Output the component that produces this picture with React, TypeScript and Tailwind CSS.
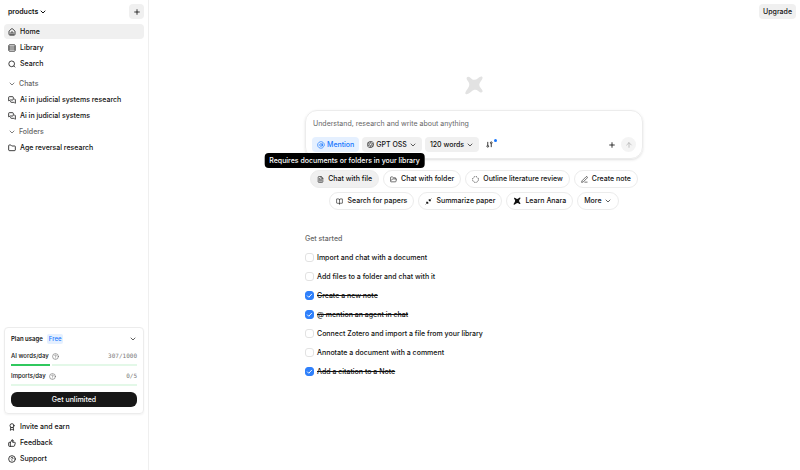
import { useState } from 'react';
import type { ReactNode } from 'react';
import {
  ArrowUp,
  AtSign,
  Award,
  BookOpen,
  ChevronDown,
  CircleHelp,
  FileText,
  Folder,
  FolderOpen,
  House,
  MessagesSquare,
  PenLine,
  Plus,
  ThumbsUp,
} from 'lucide-react';
import { SiOpenai } from 'react-icons/si';

const icon = 'size-2 shrink-0';
const chipIcon = 'size-[7px] shrink-0';

function AnaraMark({ className }: { className?: string }) {
  return (
    <svg viewBox="0 0 24 24" fill="currentColor" className={className} aria-hidden="true">
      <path d="M3.6 2.6C4.8 1.4 6.4 2 8 3.6C10.6 6.4 13.6 6.6 16.8 4C18.8 2.4 20.6 1.2 21.8 2.2C22.9 3.2 22.2 4.8 20.6 6.8C17.8 10.4 17.6 12.6 20 15.6C21.8 17.8 23 19.2 22 20.4C20.8 21.6 19.2 20.8 17.4 19.4C14.4 17 12 17.2 8.6 20C5.8 22.2 3.4 23.8 2 22.7C.8 21.6 2 19.8 4 17C6.8 13 7.2 10.6 4.8 7.4C3.2 5.2 2.6 3.8 3.6 2.6Z" />
    </svg>
  );
}

function LibraryIcon() {
  return (
    <svg viewBox="0 0 24 24" className={icon} fill="none" stroke="currentColor" strokeWidth="2.4" aria-hidden="true">
      <rect x="2.5" y="2.5" width="19" height="19" rx="2" />
      <path d="M2.5 9h19M2.5 15h19" />
    </svg>
  );
}

function SearchIcon() {
  return (
    <svg viewBox="0 0 24 24" className={icon} fill="none" stroke="currentColor" strokeWidth="2.4" aria-hidden="true">
      <circle cx="11" cy="11.5" r="8.6" />
      <path d="M17 17.5l4.5 4.5" />
    </svg>
  );
}

function DashedCircleIcon() {
  return (
    <svg viewBox="0 0 24 24" className={chipIcon} fill="none" stroke="currentColor" strokeWidth="2.6" aria-hidden="true">
      <circle cx="12" cy="12" r="10" strokeDasharray="4 3.85" />
    </svg>
  );
}

function CollapseIcon() {
  return (
    <svg
      viewBox="0 0 24 24"
      className={chipIcon}
      fill="currentColor"
      stroke="currentColor"
      strokeWidth="2"
      strokeLinejoin="round"
      aria-hidden="true"
    >
      <path d="M14 4v6h6zM4 14h6v6z" />
      <path d="M15 9l7-7M2 22l7-7" />
    </svg>
  );
}

function NavItem({ icon, label, active }: { icon: ReactNode; label: string; active?: boolean }) {
  return (
    <a
      href="#"
      className={`flex h-[15px] items-center gap-1 rounded px-1 font-medium ${active ? 'bg-[#f0f0f0]' : ''}`}
    >
      {icon}
      {label}
    </a>
  );
}

function SectionLabel({ label }: { label: string }) {
  return (
    <button className="flex h-[15px] items-center gap-[3px] px-1 text-left font-medium text-[#666]">
      <ChevronDown className="size-2" strokeWidth={2.5} />
      {label}
    </button>
  );
}

function Usage({ label, value, used, total }: { label: string; value: string; used: number; total: number }) {
  return (
    <div>
      <div className="flex h-[10px] items-center">
        <span className="font-medium">{label}</span>
        <CircleHelp className="ml-[3px] size-[7px] text-[#666]" />
        <span className="ml-auto font-['DejaVu_Sans_Mono',monospace] text-[#777]">{value}</span>
      </div>
      <div className="mt-[3px] flex h-[2px] gap-[2px]">
        {used > 0 && <div className="bg-[#30c85e]" style={{ width: `${(used / total) * 100}%` }} />}
        <div className="flex-1 bg-[#e3f8e8]" />
      </div>
    </div>
  );
}

function Sidebar() {
  return (
    <aside className="flex w-[149px] shrink-0 flex-col border-r border-[#efefef] p-1">
      <div className="flex h-[15px] items-center justify-between pl-1">
        <button className="flex items-center gap-px font-semibold">
          products
          <ChevronDown className="size-2" strokeWidth={3} />
        </button>
        <button aria-label="New" className="grid size-[15px] place-items-center rounded bg-[#f0f0f0]">
          <Plus className="size-2" strokeWidth={2.5} />
        </button>
      </div>
      <nav className="mt-[5px] flex flex-col gap-px">
        <NavItem icon={<House className={icon} strokeWidth={2.4} />} label="Home" active />
        <NavItem icon={<LibraryIcon />} label="Library" />
        <NavItem icon={<SearchIcon />} label="Search" />
      </nav>
      <div className="mt-[5px] flex flex-col gap-px">
        <SectionLabel label="Chats" />
        <NavItem icon={<MessagesSquare className={icon} strokeWidth={2.4} />} label="Ai in judicial systems research" />
        <NavItem icon={<MessagesSquare className={icon} strokeWidth={2.4} />} label="Ai in judicial systems" />
        <SectionLabel label="Folders" />
        <NavItem icon={<Folder className={icon} strokeWidth={2.4} />} label="Age reversal research" />
      </div>

      <section className="mt-auto flex flex-col rounded border border-[#ececec] p-[6px] text-[6px] shadow-xs">
        <button className="flex h-[10px] items-center text-left font-semibold">
          Plan usage
          <span className="ml-1 rounded-xs bg-[#e5f0ff] px-[2px] font-medium text-[#1676fe]">Free</span>
          <ChevronDown className="ml-auto size-2" />
        </button>
        <div className="mt-[7px] flex flex-col gap-[5px]">
          <Usage label="AI words/day" value="307/1000" used={307} total={1000} />
          <Usage label="Imports/day" value="0/5" used={0} total={5} />
        </div>
        <button className="mt-[6px] h-[15px] rounded-md bg-[#171717] text-[7px] font-medium text-white">
          Get unlimited
        </button>
      </section>
      <div className="mt-[5px] flex flex-col gap-px">
        <NavItem icon={<Award className={icon} strokeWidth={2.4} />} label="Invite and earn" />
        <NavItem icon={<ThumbsUp className={icon} strokeWidth={2.4} />} label="Feedback" />
        <NavItem icon={<CircleHelp className={icon} strokeWidth={2.4} />} label="Support" />
      </div>
    </aside>
  );
}

function Composer() {
  return (
    <div className="w-full rounded-xl border border-[#ececec] p-[6px] shadow-sm">
      <input
        aria-label="Message"
        placeholder="Understand, research and write about anything"
        className="block h-3 w-full px-px outline-none placeholder:text-[#666]"
      />
      <div className="mt-2 flex h-[15px] items-stretch gap-[3px] font-medium">
        <button className="flex items-center gap-[2px] rounded bg-[#e5f0ff] px-[5px] text-[#1676fe]">
          <AtSign className={icon} />
          Mention
        </button>
        <button className="flex items-center gap-[2px] rounded bg-[#f0f0f0] px-[5px]">
          <SiOpenai className={chipIcon} />
          GPT OSS
          <ChevronDown className="size-2" />
        </button>
        <button className="flex items-center gap-[2px] rounded bg-[#f0f0f0] px-[5px]">
          120 words
          <ChevronDown className="size-2" />
        </button>
        <button aria-label="Settings" className="relative grid w-[15px] place-items-center">
          <svg viewBox="0 0 24 24" className="size-[7px]" fill="none" stroke="currentColor" strokeWidth="2.8">
            <path d="M6 3v11M18 10v11" />
            <circle cx="6" cy="18" r="3" />
            <circle cx="18" cy="6" r="3" />
          </svg>
          <span className="absolute top-[2px] right-0 size-[3px] rounded-full bg-[#1676fe]" />
        </button>
        <div className="ml-auto flex gap-[2px]">
          <button aria-label="Attach" className="grid w-[15px] place-items-center">
            <Plus className="size-2" strokeWidth={2.5} />
          </button>
          <button aria-label="Send" className="grid w-[15px] place-items-center rounded-full bg-[#f4f4f4] text-[#aaa]">
            <ArrowUp className="size-2" />
          </button>
        </div>
      </div>
    </div>
  );
}

function Suggestion({ icon, label, hovered }: { icon?: ReactNode; label: string; hovered?: boolean }) {
  return (
    <button
      className={`flex h-[18px] items-center gap-1 rounded-full border border-[#ececec] px-[6px] font-medium ${hovered ? 'bg-[#f0f0f0]' : ''}`}
    >
      {icon}
      {label}
    </button>
  );
}

const initialSteps = [
  { label: 'Import and chat with a document', done: false },
  { label: 'Add files to a folder and chat with it', done: false },
  { label: 'Create a new note', done: true },
  { label: '@ mention an agent in chat', done: true },
  { label: 'Connect Zotero and import a file from your library', done: false },
  { label: 'Annotate a document with a comment', done: false },
  { label: 'Add a citation to a Note', done: true },
];

function GetStarted() {
  const [steps, setSteps] = useState(initialSteps);

  const toggle = (index: number) =>
    setSteps(steps.map((step, i) => (i === index ? { ...step, done: !step.done } : step)));

  return (
    <section className="mt-6 w-full">
      <h2 className="flex h-[10px] items-center font-medium text-[#666]">Get started</h2>
      <ul className="mt-1">
        {steps.map((step, i) => (
          <li key={step.label}>
            <label className="flex h-[19px] items-center gap-[3px] font-medium">
              <span className="grid size-[9px] place-items-center">
                <input
                  type="checkbox"
                  checked={step.done}
                  onChange={() => toggle(i)}
                  className="col-start-1 row-start-1 size-[9px] appearance-none rounded-[3px] border border-[#e2e2e2] checked:border-[#2f80fb] checked:bg-[#2f80fb]"
                />
                {step.done && (
                  <svg
                    viewBox="0 0 12 12"
                    className="pointer-events-none col-start-1 row-start-1 size-[7px]"
                    fill="none"
                    stroke="white"
                    strokeWidth="1.6"
                  >
                    <path d="M2 6.2l2.8 2.8L10 3.4" />
                  </svg>
                )}
              </span>
              <span className={step.done ? 'line-through' : ''}>{step.label}</span>
            </label>
          </li>
        ))}
      </ul>
    </section>
  );
}

export default function App() {
  return (
    <div className="flex min-h-screen bg-white font-['Inter',sans-serif] text-[7px] leading-[10px] text-[#111]">
      <Sidebar />
      <main className="flex flex-1 flex-col pr-px">
        <header className="flex justify-end px-[3px] pt-1">
          <button className="h-[15px] rounded bg-[#f0f0f0] px-1 font-medium">Upgrade</button>
        </header>
        <div className="mx-auto mt-14 flex w-full max-w-[338px] flex-col items-center">
          <AnaraMark className="size-5 text-[#e2e2e2]" />
          <div className="mt-[15px] w-full">
            <Composer />
          </div>
          <div className="mt-[11px] flex flex-wrap justify-center gap-1">
            <div className="relative">
              <Suggestion icon={<FileText className={chipIcon} />} label="Chat with file" hovered />
              <div
                role="tooltip"
                className="absolute bottom-full left-1/2 mb-[2px] flex h-[15px] -translate-x-1/2 items-center rounded bg-black px-[5px] font-medium whitespace-nowrap text-white"
              >
                Requires documents or folders in your library
              </div>
            </div>
            <Suggestion icon={<FolderOpen className={chipIcon} />} label="Chat with folder" />
            <Suggestion icon={<DashedCircleIcon />} label="Outline literature review" />
            <Suggestion icon={<PenLine className={chipIcon} />} label="Create note" />
            <Suggestion icon={<BookOpen className={chipIcon} />} label="Search for papers" />
            <Suggestion icon={<CollapseIcon />} label="Summarize paper" />
            <Suggestion icon={<AnaraMark className={icon} />} label="Learn Anara" />
            <button className="flex h-[18px] items-center gap-[2px] rounded-full border border-[#ececec] px-[6px] font-medium">
              More
              <ChevronDown className="size-2" />
            </button>
          </div>
          <GetStarted />
        </div>
      </main>
    </div>
  );
}
